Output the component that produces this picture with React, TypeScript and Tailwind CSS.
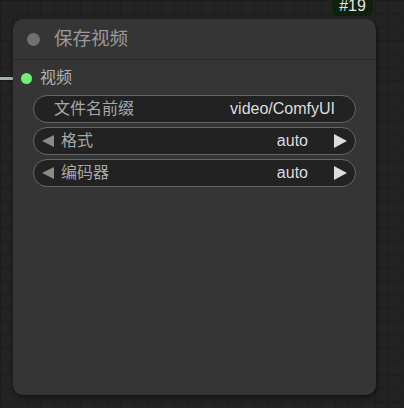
import React from 'react';

const font = { fontFamily: '"Liberation Sans", "Noto Sans CJK SC", Arial, sans-serif' };

const LeftArrow = () => (
  <svg width="12" height="12" viewBox="0 0 12 12" className="shrink-0">
    <polygon points="12,0 12,12 0,6" fill="#8a8a8a" />
  </svg>
);

const RightArrow = () => (
  <svg width="13" height="14" viewBox="0 0 13 14" className="shrink-0">
    <polygon points="0,0 0,14 13,7" fill="#dddddd" />
  </svg>
);

const TextWidget: React.FC<{ label: string; value: string }> = ({ label, value }) => (
  <div className="h-[28px] rounded-full border border-[#656565] bg-[#222222] flex items-center justify-between pl-[20px] pr-[20px] text-[16px]">
    <span className="text-[#a8a8a8]">{label}</span>
    <span className="text-[#dddddd]">{value}</span>
  </div>
);

const ComboWidget: React.FC<{ label: string; value: string }> = ({ label, value }) => (
  <div className="h-[28px] rounded-full border border-[#656565] bg-[#222222] flex items-center pl-[8px] pr-[8px] text-[16px]">
    <LeftArrow />
    <span className="ml-[7px] text-[#a8a8a8]">{label}</span>
    <span className="ml-auto mr-[26px] text-[#dddddd]">{value}</span>
    <RightArrow />
  </div>
);

export default function App() {
  return (
    <div
      className="relative w-[404px] h-[408px] overflow-hidden bg-[#232323] bg-[image:linear-gradient(to_right,#1d1d1d_1px,transparent_1px),linear-gradient(to_bottom,#1d1d1d_1px,transparent_1px)] bg-[size:13.4px_13.4px]"
      style={font}
    >
      {/* incoming link */}
      <div className="absolute left-0 top-[76px] w-[16px] h-[5px] bg-[#1a1a1a]" />
      <div className="absolute left-0 top-[77px] w-[16px] h-[3px] bg-[#a3b5a3]" />

      {/* node id badge */}
      <div className="absolute left-[332px] top-[-5px] w-[41px] h-[21px] rounded-[6px] bg-[#0f200f] flex items-center justify-center text-[16px] leading-none text-[#e6e6e6]">
        #19
      </div>

      <div className="relative ml-[13px] mt-[19px] w-[363px] h-[376px] rounded-[10px] bg-[#353535] shadow-[1px_2px_5px_rgba(0,0,0,0.55)] flex flex-col">
        <div className="h-[41px] flex items-center border-b border-[#2a2a2a] shrink-0">
          <div className="ml-[14px] w-[13px] h-[13px] rounded-full bg-[#717171]" />
          <span className="ml-[14px] text-[18.5px] text-[#9a9a9a]">保存视频</span>
        </div>

        <div className="h-[35px] flex items-center pt-[1px]">
          <div className="ml-[8px] w-[11px] h-[11px] rounded-full bg-[#6ef26e]" />
          <span className="ml-[8px] text-[16px] text-[#b0b0b0]">视频</span>
        </div>

        <div className="px-[20px] flex flex-col gap-[4px]">
          <TextWidget label="文件名前缀" value="video/ComfyUI" />
          <ComboWidget label="格式" value="auto" />
          <ComboWidget label="编码器" value="auto" />
        </div>
      </div>
    </div>
  );
}
